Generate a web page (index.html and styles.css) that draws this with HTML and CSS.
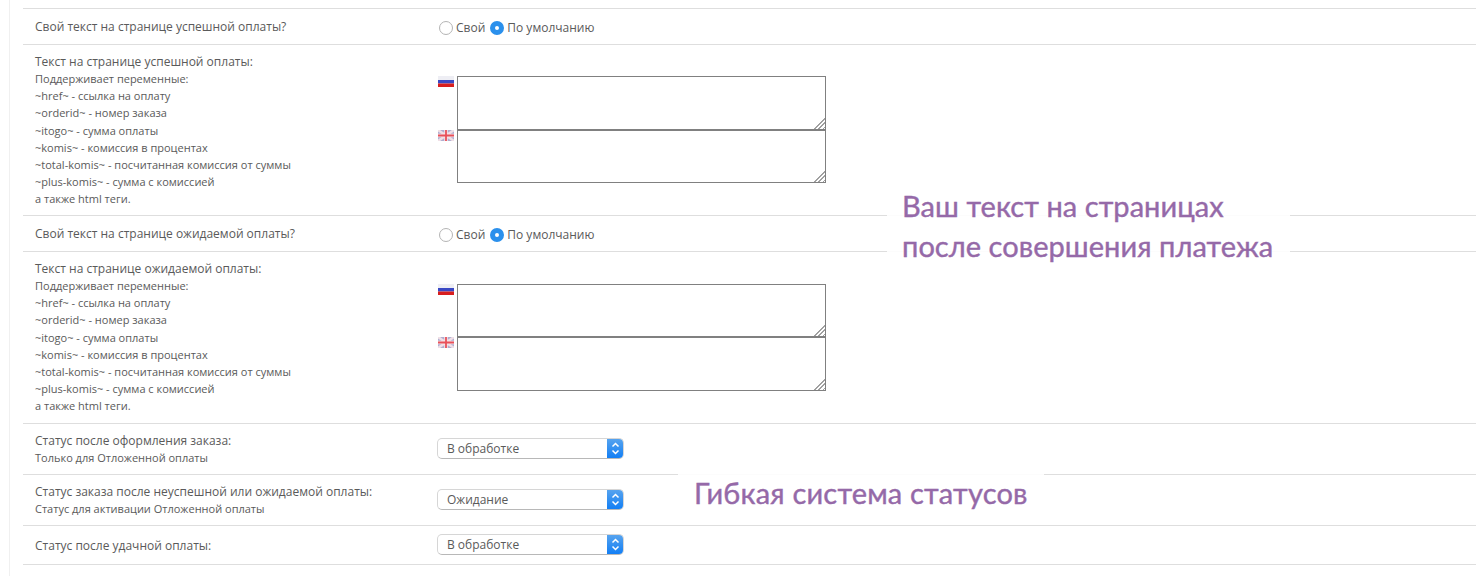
FILE: index.html
```html
<!DOCTYPE html>
<html lang="ru">
<head>
<meta charset="utf-8">
<title>Настройки оплаты</title>
<link rel="stylesheet" href="styles.css">
</head>
<body>
<div class="panel">
  <div class="row row-radio">
    <div class="label">Свой текст на странице успешной оплаты?</div>
    <div class="control radios">
      <label class="radio"><input type="radio" name="a">Свой</label>
      <label class="radio"><input type="radio" name="a" checked>По умолчанию</label>
    </div>
  </div>
  <div class="row row-text">
    <div class="label">
      <div class="title">Текст на странице успешной оплаты:</div>
      <div class="note">Поддерживает переменные:<br>~href~ - ссылка на оплату<br>~orderid~ - номер заказа<br>~itogo~ - сумма оплаты<br>~komis~ - комиссия в процентах<br>~total-komis~ - посчитанная комиссия от суммы<br>~plus-komis~ - сумма с комиссией<br>а также html теги.</div>
    </div>
    <div class="control fields">
      <div class="lang">
        <svg class="flag" viewBox="0 0 16 11"><rect width="16" height="4" fill="#eeeef4"/><rect y="4" width="16" height="3.5" fill="#3a48c4"/><rect y="7.500" width="16" height="3.500" fill="#d81e1e"/></svg>
        <textarea></textarea>
      </div>
      <div class="lang">
        <svg class="flag" viewBox="0 0 16 11"><rect width="16" height="11" fill="#b0aed0"/><path d="M0 0L16 11M16 0L0 11" stroke="#f0dfe6" stroke-width="2.400"/><path d="M8 0V11M0 5.500H16" stroke="#f6e4e8" stroke-width="3.600"/><path d="M8 0V11M0 5.500H16" stroke="#e8505a" stroke-width="1.800"/></svg>
        <textarea></textarea>
      </div>
    </div>
  </div>
  <div class="row row-radio">
    <div class="label">Свой текст на странице ожидаемой оплаты?</div>
    <div class="control radios">
      <label class="radio"><input type="radio" name="b">Свой</label>
      <label class="radio"><input type="radio" name="b" checked>По умолчанию</label>
    </div>
  </div>
  <div class="row row-text row-text-wide">
    <div class="label">
      <div class="title">Текст на странице ожидаемой оплаты:</div>
      <div class="note">Поддерживает переменные:<br>~href~ - ссылка на оплату<br>~orderid~ - номер заказа<br>~itogo~ - сумма оплаты<br>~komis~ - комиссия в процентах<br>~total-komis~ - посчитанная комиссия от суммы<br>~plus-komis~ - сумма с комиссией<br>а также html теги.</div>
    </div>
    <div class="control fields">
      <div class="lang">
        <svg class="flag" viewBox="0 0 16 11"><rect width="16" height="4" fill="#eeeef4"/><rect y="4" width="16" height="3.5" fill="#3a48c4"/><rect y="7.500" width="16" height="3.500" fill="#d81e1e"/></svg>
        <textarea></textarea>
      </div>
      <div class="lang">
        <svg class="flag" viewBox="0 0 16 11"><rect width="16" height="11" fill="#b0aed0"/><path d="M0 0L16 11M16 0L0 11" stroke="#f0dfe6" stroke-width="2.400"/><path d="M8 0V11M0 5.500H16" stroke="#f6e4e8" stroke-width="3.600"/><path d="M8 0V11M0 5.500H16" stroke="#e8505a" stroke-width="1.800"/></svg>
        <textarea></textarea>
      </div>
    </div>
  </div>
  <div class="row row-select">
    <div class="label">Статус после оформления заказа:<div class="note">Только для Отложенной оплаты</div></div>
    <div class="control">
      <div class="select"><span class="value">В обработке</span><span class="arrows"><svg viewBox="0 0 17 21"><path d="M5.500 8.500L8.500 5.500L11.500 8.500M5.500 12.500L8.500 15.500L11.500 12.500" fill="none" stroke="#fff" stroke-width="1.500"/></svg></span></div>
    </div>
  </div>
  <div class="row row-select">
    <div class="label">Статус заказа после неуспешной или ожидаемой оплаты:<div class="note">Статус для активации Отложенной оплаты</div></div>
    <div class="control">
      <div class="select"><span class="value">Ожидание</span><span class="arrows"><svg viewBox="0 0 17 21"><path d="M5.500 8.500L8.500 5.500L11.500 8.500M5.500 12.500L8.500 15.500L11.500 12.500" fill="none" stroke="#fff" stroke-width="1.500"/></svg></span></div>
    </div>
  </div>
  <div class="row row-last">
    <div class="label">Статус после удачной оплаты:</div>
    <div class="control">
      <div class="select"><span class="value">В обработке</span><span class="arrows"><svg viewBox="0 0 17 21"><path d="M5.500 8.500L8.500 5.500L11.500 8.500M5.500 12.500L8.500 15.500L11.500 12.500" fill="none" stroke="#fff" stroke-width="1.500"/></svg></span></div>
    </div>
  </div>
</div>
<div class="callout callout-text">Ваш текст на страницах<br>после совершения платежа</div>
<div class="callout callout-status">Гибкая система статусов</div>
</body>
</html>
```
FILE: styles.css
```css
html, body { margin: 0; padding: 0; height: 576px; overflow: hidden; background: #fff; }
body { position: relative; font-family: "Open Sans", "Noto Sans", sans-serif; color: #5a5a5a; font-size: 12px; }
.panel { margin-left: 9px; padding: 8px 0 0 13px; border-left: 1px solid #f0f0f0; height: 568px; }
.row { display: flex; border-top: 1px solid #dedede; box-sizing: border-box; }
.row-radio { height: 36px; align-items: center; }
.row-text { height: 171px; }
.row-text-wide { height: 172px; }
.row-select { height: 51px; align-items: center; }
.row-last { height: 40px; align-items: center; border-bottom: 1px solid #dedede; }
.label { width: 402px; padding-left: 12px; flex: none; line-height: 17px; }
.note { font-size: 11px; line-height: 17.200px; }
.row-text .label { padding-top: 8px; }
.title { line-height: 17px; }
.radios { display: flex; gap: 5px; padding: 2px 0 0 2px; }
.radio { display: flex; align-items: center; gap: 3px; }
.radio input { appearance: none; width: 14px; height: 14px; margin: 0; border: 1px solid #b4b4b4; border-radius: 50%; background: #fff; }
.radio input:checked { border: 5px solid #2b90ec; background: #fff; }
.fields { padding-top: 31px; display: flex; flex-direction: column; }
.row-text-wide .fields { padding-top: 32px; }
.lang { position: relative; display: flex; align-items: flex-start; gap: 3px; padding-left: 1px; }
.flag { width: 16px; height: 11px; flex: none; }
.lang textarea { width: 369px; height: 54px; box-sizing: border-box; margin: 0; border: 1px solid #808080; background: #fff; padding: 2px; flex: none; resize: none; }
.lang + .lang textarea { height: 53px; }
.row-text-wide .lang textarea { height: 53px; }
.row-text-wide .lang + .lang textarea { height: 54px; }
.lang::after { content: ""; position: absolute; right: 1px; bottom: 1px; width: 12px; height: 12px; clip-path: polygon(100% 0, 100% 100%, 0 100%); background: repeating-linear-gradient(135deg, #a0a0a0 0 1px, #fff 1px 3px); }
.select { width: 187px; height: 21px; box-sizing: border-box; display: flex; justify-content: space-between; border: 1px solid #d6d6d6; border-bottom-color: #b8b8b8; border-radius: 5px; background: #fff; overflow: hidden; line-height: 19px; }
.row-select .control, .row-last .control { margin-bottom: 2px; }
.value { padding-left: 9px; }
.arrows { width: 17px; height: 21px; margin: -1px -1px 0 0; flex: none; background: linear-gradient(#5aa5ee, #0f7df5); }
.arrows svg { display: block; width: 17px; height: 21px; }
.callout { position: absolute; background: rgba(255, 255, 255, 0.9); color: #9569a8; font-family: "Lato", "DejaVu Sans", sans-serif; font-size: 29px; line-height: 40px; box-sizing: border-box; -webkit-text-stroke: 0.4px #9569a8; }
.callout-text { left: 887px; top: 186px; width: 403px; height: 79px; padding-left: 15px; letter-spacing: 0.05px; }
.callout-status { left: 678px; top: 474px; width: 366px; height: 41px; padding-left: 16px; line-height: 38px; letter-spacing: 0.2px; }
```
